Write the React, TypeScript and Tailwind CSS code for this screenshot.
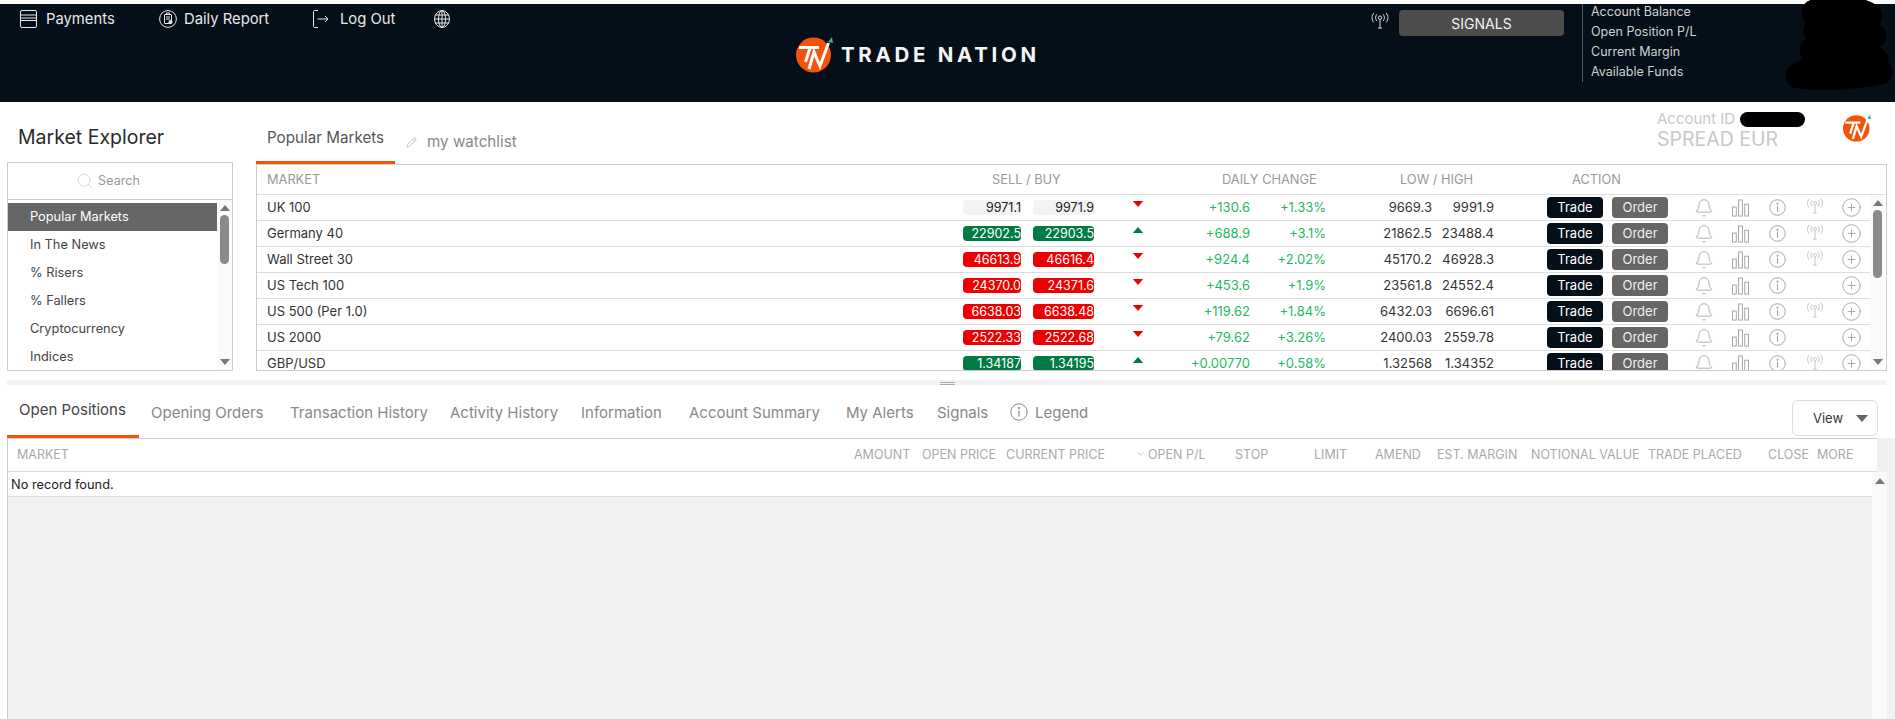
import { Bell, CirclePlus, Pencil, Search } from "lucide-react";

const markets = [
  { name: "UK 100", sell: "9971.1", buy: "9971.9", tone: "flat", dir: "down", change: "+130.6", pct: "+1.33%", low: "9669.3", high: "9991.9", signal: true },
  { name: "Germany 40", sell: "22902.5", buy: "22903.5", tone: "up", dir: "up", change: "+688.9", pct: "+3.1%", low: "21862.5", high: "23488.4", signal: true },
  { name: "Wall Street 30", sell: "46613.9", buy: "46616.4", tone: "down", dir: "down", change: "+924.4", pct: "+2.02%", low: "45170.2", high: "46928.3", signal: true },
  { name: "US Tech 100", sell: "24370.0", buy: "24371.6", tone: "down", dir: "down", change: "+453.6", pct: "+1.9%", low: "23561.8", high: "24552.4", signal: false },
  { name: "US 500 (Per 1.0)", sell: "6638.03", buy: "6638.48", tone: "down", dir: "down", change: "+119.62", pct: "+1.84%", low: "6432.03", high: "6696.61", signal: true },
  { name: "US 2000", sell: "2522.33", buy: "2522.68", tone: "down", dir: "down", change: "+79.62", pct: "+3.26%", low: "2400.03", high: "2559.78", signal: false },
  { name: "GBP/USD", sell: "1.34187", buy: "1.34195", tone: "up", dir: "up", change: "+0.00770", pct: "+0.58%", low: "1.32568", high: "1.34352", signal: true },
];

const categories = ["Popular Markets", "In The News", "% Risers", "% Fallers", "Cryptocurrency", "Indices"];

const bottomTabs = [
  { label: "Opening Orders", w: "w-[139px]" },
  { label: "Transaction History", w: "w-[160px]" },
  { label: "Activity History", w: "w-[131px]" },
  { label: "Information", w: "w-[108px]" },
  { label: "Account Summary", w: "w-[157px]" },
  { label: "My Alerts", w: "w-[91px]" },
  { label: "Signals", w: "w-[73px]" },
];

const positionCols = [
  { label: "MARKET", w: "w-[846px] pl-[9px]" },
  { label: "AMOUNT", w: "w-[68px]" },
  { label: "OPEN PRICE", w: "w-[84px]" },
  { label: "CURRENT PRICE", w: "w-[131px]" },
  { label: "OPEN P/L", w: "w-[98px] pl-[11px]" },
  { label: "STOP", w: "w-[79px]" },
  { label: "LIMIT", w: "w-[61px]" },
  { label: "AMEND", w: "w-[62px]" },
  { label: "EST. MARGIN", w: "w-[94px]" },
  { label: "NOTIONAL VALUE", w: "w-[117px]" },
  { label: "TRADE PLACED", w: "w-[120px]" },
  { label: "CLOSE", w: "w-[49px]" },
  { label: "MORE", w: "w-[60px]" },
];

function TnLogo({ className }: { className: string }) {
  return (
    <svg viewBox="0 0 37 37" className={className}>
      <circle cx="17.5" cy="19" r="17.5" fill="#f5520a" />
      <path d="M3 11.5H23M14 12L9.5 26M13 33L18 16L24 30L32.5 7" fill="none" stroke="#fff" strokeWidth="3" />
      <path d="M32 6L36 1L37 7Z" fill="#2fb58c" />
    </svg>
  );
}

function SignalIcon({ className }: { className: string }) {
  return (
    <svg viewBox="0 0 20 18" fill="none" stroke="currentColor" strokeWidth="1" className={className}>
      <circle cx="10" cy="6" r="1.8" />
      <path d="M10 8V17M8 17H12M6.5 2.5C5 4.5 5 7.5 6.5 9.5M13.5 2.5C15 4.5 15 7.5 13.5 9.5M3.5 1C1 4 1 8 3.5 11M16.5 1C19 4 19 8 16.5 11" />
    </svg>
  );
}

function InfoIcon({ className }: { className: string }) {
  return (
    <svg viewBox="0 0 18 18" fill="none" stroke="currentColor" strokeWidth="1" className={className}>
      <circle cx="9" cy="9" r="8.2" />
      <path d="M9 7.5V13.5" strokeWidth="1.2" />
      <circle cx="9" cy="5" r="0.7" fill="currentColor" />
    </svg>
  );
}

function BarsIcon({ className }: { className: string }) {
  return (
    <svg viewBox="0 0 18 18" fill="none" stroke="currentColor" strokeWidth="1" className={className}>
      <rect x="0.5" y="8" width="4" height="9.5" />
      <rect x="7" y="0.5" width="4" height="17" />
      <rect x="13.5" y="5" width="4" height="12.5" />
    </svg>
  );
}

function Caret({ up, className }: { up?: boolean; className: string }) {
  return (
    <svg viewBox="0 0 12 7" className={className}>
      <path d={up ? "M6 0L12 7H0Z" : "M0 0H12L6 7Z"} fill="currentColor" />
    </svg>
  );
}

function ScrollCol({ thumb }: { thumb: string }) {
  return (
    <div className="flex w-[15px] shrink-0 flex-col items-center bg-[#fafafa] pt-[5px] pb-[5px] text-[#777]">
      <Caret up className="h-[6px] w-[10px] shrink-0" />
      <div className={`mt-[4px] w-[9px] rounded-[5px] bg-[#8a8a8a] ${thumb}`} />
      <Caret className="mt-auto h-[6px] w-[10px] shrink-0" />
    </div>
  );
}

function PriceBox({ value, tone }: { value: string; tone: string }) {
  const look =
    tone === "up" ? "bg-[#007b43] text-white" : tone === "down" ? "bg-[#ee0000] text-white" : "bg-[#f3f3f3] text-[#222]";
  return (
    <div className={`h-[15px] w-[61px] rounded-[4px] text-right text-[12.5px] leading-[15px] ${look}`}>{value}</div>
  );
}

function Header() {
  return (
    <header className="relative flex h-[98px] shrink-0 items-start bg-[#050f19] text-white">
      <nav className="flex h-[30px] w-[796px] shrink-0 items-center pl-[20px] text-[14.8px] text-[#e8e8e8]">
        <div className="flex w-[139px] items-center gap-[9px]">
          <svg viewBox="0 0 17 18" fill="none" stroke="currentColor" strokeWidth="1" className="h-[18px] w-[17px]">
            <rect x="0.5" y="0.5" width="16" height="17" rx="1.5" />
            <path d="M0.5 5H16.5M0.5 8H16.5M0.5 10.5H16.5" />
          </svg>
          <span>Payments</span>
        </div>
        <div className="flex w-[154px] items-center gap-[7px]">
          <svg viewBox="0 0 18 18" fill="none" stroke="currentColor" strokeWidth="1" className="h-[18px] w-[18px]">
            <circle cx="9" cy="9" r="8.4" />
            <rect x="5.5" y="4.5" width="7" height="9" rx="0.5" />
            <path d="M7.5 4V3H10.5V4M7 7H11M7 9H11" />
            <circle cx="11.5" cy="12" r="1.6" fill="currentColor" />
          </svg>
          <span>Daily Report</span>
        </div>
        <div className="flex w-[121px] items-center gap-[11px]">
          <svg viewBox="0 0 16 18" fill="none" stroke="currentColor" strokeWidth="1" className="h-[18px] w-[16px]">
            <path d="M5 0.5H2C1 0.5 0.5 1 0.5 2V16C0.5 17 1 17.5 2 17.5H5M4.5 9H15M12 6L15 9L12 12" />
          </svg>
          <span>Log Out</span>
        </div>
        <svg viewBox="0 0 16 18" fill="none" stroke="currentColor" strokeWidth="1" className="h-[18px] w-[16px]">
          <ellipse cx="8" cy="9" rx="7.5" ry="8.4" />
          <ellipse cx="8" cy="9" rx="3.5" ry="8.4" />
          <path d="M8 0.6V17.4M1 5H15M0.5 9H15.5M1 13H15" />
        </svg>
      </nav>

      <div className="flex w-[574px] shrink-0 items-center gap-[8px] pt-[32px]">
        <TnLogo className="h-[37px] w-[37px]" />
        <span className="font-bold whitespace-nowrap text-[20.5px] leading-[24px] tracking-[0.18em] text-[#f4f4f4]">TRADE NATION</span>
      </div>

      <SignalIcon className="mt-[8px] h-[17px] w-[20px] shrink-0 text-[#e4e4e4]" />
      <button className="mt-[6px] ml-[9px] h-[26px] w-[165px] shrink-0 rounded-[4px] bg-[#4d4d4d] text-[14px] text-[#f2f2f2]">SIGNALS</button>

      <div className="ml-[18px] h-[78px] border-l border-[#555] pl-[8px] text-[12.5px] leading-[20px] text-[#d0d0d0]">
        <div className="-mt-[2px] flex flex-col">
          <span>Account Balance</span>
          <span>Open Position P/L</span>
          <span>Current Margin</span>
          <span>Available Funds</span>
        </div>
      </div>

      <svg viewBox="0 0 110 90" className="absolute top-[-4px] right-[3px] h-[90px] w-[110px]">
        <path
          d="M32 12C55 8 78 8 88 16C70 22 40 20 34 30C40 40 70 34 92 36C80 48 40 42 30 50C50 58 85 52 94 60C70 70 30 62 16 76C40 80 80 76 98 72"
          fill="none"
          stroke="#000"
          strokeWidth="25"
          strokeLinecap="round"
          strokeLinejoin="round"
        />
      </svg>
    </header>
  );
}

function MarketExplorer() {
  return (
    <aside className="w-[226px] shrink-0">
      <h1 className="h-[60px] pt-[23px] pl-[11px] text-[19.5px] leading-[24px] font-normal text-[#2a2a2a]">Market Explorer</h1>
      <div className="border border-[#ccc]">
        <div className="flex h-[37px] items-center justify-center gap-[4px] border-b border-[#ccc] pr-[24px] text-[12.6px] text-[#999]">
          <Search className="h-[18px] w-[18px] text-[#ccc]" strokeWidth={1} />
          <span>Search</span>
        </div>
        <div className="flex h-[170px] overflow-hidden">
          <ul className="flex-1 pt-[3px] text-[12.8px] text-[#444]">
            {categories.map((c, i) => (
              <li key={c} className={`flex h-[28px] items-center pl-[22px] ${i === 0 ? "bg-[#666] text-white" : ""}`}>
                {c}
              </li>
            ))}
          </ul>
          <ScrollCol thumb="h-[49px]" />
        </div>
      </div>
    </aside>
  );
}

function MarketRow({ m }: { m: (typeof markets)[number] }) {
  return (
    <div className="flex h-[26px] shrink-0 items-center border-b border-[#ddd] text-[13px] text-[#333]">
      <div className="w-[706px] shrink-0 pl-[10px]">{m.name}</div>
      <PriceBox value={m.sell} tone={m.tone} />
      <div className="ml-[12px]">
        <PriceBox value={m.buy} tone={m.tone} />
      </div>
      <div className="flex w-[88px] shrink-0 justify-center pb-[7px]">
        <Caret up={m.dir === "up"} className={`h-[6px] w-[12px] ${m.dir === "up" ? "text-[#007b43]" : "text-[#ee0000]"}`} />
      </div>
      <div className="w-[68px] shrink-0 text-right text-[#1fb866]">{m.change}</div>
      <div className="w-[76px] shrink-0 text-right text-[#1fb866]">{m.pct}</div>
      <div className="w-[106px] shrink-0 text-right">{m.low}</div>
      <div className="w-[62px] shrink-0 text-right">{m.high}</div>
      <button className="ml-[53px] h-[21px] w-[56px] shrink-0 rounded-[4px] bg-[#050f19] text-[13px] text-white">Trade</button>
      <button className="ml-[9px] h-[21px] w-[56px] shrink-0 rounded-[4px] bg-[#666] text-[13px] text-[#f0f0f0]">Order</button>
      <div className="ml-[17px] flex items-center text-[#a0a0a0]">
        <div className="flex w-[37px] justify-center">
          <Bell className="h-[20px] w-[20px]" strokeWidth={1} />
        </div>
        <div className="flex w-[37px] justify-center">
          <BarsIcon className="h-[18px] w-[17px]" />
        </div>
        <div className="flex w-[37px] justify-center">
          <InfoIcon className="h-[17px] w-[17px]" />
        </div>
        <div className="flex h-[20px] w-[37px] justify-center pb-[3px]">
          {m.signal && <SignalIcon className="h-[16px] w-[18px] text-[#bbb]" />}
        </div>
        <div className="flex w-[37px] justify-center">
          <CirclePlus className="h-[21px] w-[21px]" strokeWidth={1} />
        </div>
      </div>
    </div>
  );
}

function MarketTable() {
  return (
    <div className="h-[207px] border border-[#ccc]">
      <div className="flex h-[30px] items-center border-b border-[#ddd] text-[12.8px] text-[#999]">
        <span className="w-[735px] shrink-0 pl-[10px]">MARKET</span>
        <span className="w-[230px] shrink-0">SELL / BUY</span>
        <span className="w-[178px] shrink-0">DAILY CHANGE</span>
        <span className="w-[172px] shrink-0">LOW / HIGH</span>
        <span>ACTION</span>
      </div>
      <div className="flex h-[175px] overflow-hidden">
        <div className="flex w-[1613px] shrink-0 flex-col">
          {markets.map((m) => (
            <MarketRow key={m.name} m={m} />
          ))}
        </div>
        <ScrollCol thumb="h-[68px]" />
      </div>
    </div>
  );
}

function TopSection() {
  return (
    <section className="flex h-[278px] shrink-0 gap-[23px] px-[7px]">
      <MarketExplorer />
      <div className="w-[1631px] shrink-0">
        <div className="flex h-[62px] items-start">
          <div className="h-[62px] w-[139px] border-b-[3px] border-[#f5520a] pt-[26px] pl-[11px] text-[15.2px] leading-[20px] whitespace-nowrap text-[#555]">
            Popular Markets
          </div>
          <div className="flex items-center gap-[10px] pt-[30px] pl-[11px] text-[15.2px] leading-[20px] text-[#888]">
            <Pencil className="h-[11px] w-[11px] text-[#999]" strokeWidth={1.2} />
            <span>my watchlist</span>
          </div>
          <div className="ml-auto flex pr-[16px]">
            <div className="w-[186px] pt-[8px] text-[#c8c8c8]">
              <div className="flex h-[18px] items-center text-[15px] whitespace-nowrap">
                Account ID
                <span className="ml-[5px] h-[15px] w-[65px] rounded-full bg-black" />
              </div>
              <div className="text-[19.5px] leading-[22px] whitespace-nowrap">SPREAD EUR</div>
            </div>
            <TnLogo className="mt-[12px] h-[28px] w-[28px]" />
          </div>
        </div>
        <MarketTable />
      </div>
    </section>
  );
}

function Positions() {
  return (
    <section className="flex min-h-0 flex-1 flex-col pl-[7px]">
      <div className="flex h-[53px] shrink-0 items-start text-[15px] leading-[20px] text-[#888]">
        <div className="h-[53px] w-[132px] shrink-0 border-b-[3px] border-[#f5520a] pt-[15px] pl-[12px] whitespace-nowrap text-[#444]">Open Positions</div>
        <div className="flex pt-[18px] pl-[12px]">
          {bottomTabs.map((t) => (
            <span key={t.label} className={`${t.w} shrink-0 whitespace-nowrap`}>
              {t.label}
            </span>
          ))}
          <InfoIcon className="mr-[7px] h-[18px] w-[18px] shrink-0" />
          <span>Legend</span>
        </div>
        <button className="mt-[15px] mr-[17px] ml-auto flex h-[36px] w-[86px] shrink-0 items-center gap-[12px] rounded-[6px] border border-[#ddd] pl-[20px] text-[13px] text-[#333]">
          View
          <Caret className="h-[7px] w-[14px] text-[#5a6670]" />
        </button>
      </div>
      <div className="flex min-h-0 flex-1 flex-col border-l border-[#ccc] bg-[#f1f1f1]">
        <div className="flex h-[34px] shrink-0">
          <div className="flex w-[1869px] shrink-0 items-center border-t border-b border-[#ddd] border-t-[#ccc] bg-white pt-[1px] text-[12.5px] text-[#aaa]">
            {positionCols.map((c) => (
              <span key={c.label} className={`${c.w} relative shrink-0 whitespace-nowrap`}>
                {c.label === "OPEN P/L" && (
                  <svg viewBox="0 0 8 5" fill="none" stroke="currentColor" className="absolute top-[6px] left-0 h-[4px] w-[7px]">
                    <path d="M0.5 0.5L4 4L7.5 0.5" />
                  </svg>
                )}
                {c.label}
              </span>
            ))}
          </div>
          <div className="w-[10px] bg-[#f0f0f0]" />
        </div>
        <div className="flex min-h-0 flex-1">
          <div className="w-[1864px] shrink-0">
            <div className="flex h-[25px] items-center border-b border-[#ddd] bg-white pt-[1px] pl-[3px] text-[12.8px] text-[#222]">No record found.</div>
          </div>
          <div className="w-[15px] shrink-0 bg-[#fafafa] pt-[6px] text-[#777]">
            <Caret up className="mx-auto h-[6px] w-[10px]" />
          </div>
        </div>
      </div>
    </section>
  );
}

export default function App() {
  return (
    <div className="flex h-[719px] flex-col overflow-hidden bg-white pt-[4px] font-['Inter','Liberation_Sans',sans-serif]">
      <Header />
      <TopSection />
      <div className="mr-[8px] ml-[7px] flex h-[5px] shrink-0 justify-center bg-[#f2f2f2]">
        <div className="mt-[2px] h-[3px] w-[15px] border-y border-[#aaa]" />
      </div>
      <Positions />
    </div>
  );
}
